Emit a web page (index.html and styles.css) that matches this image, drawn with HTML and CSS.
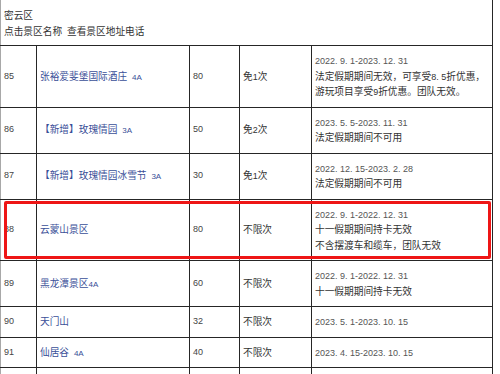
FILE: index.html
```html
<!DOCTYPE html>
<html lang="zh-CN">
<head>
<meta charset="utf-8">
<title>密云区</title>
<link rel="stylesheet" href="styles.css">
</head>
<body>
<div class="page">
<table class="list">
  <colgroup>
    <col class="c-no"><col class="c-name"><col class="c-price"><col class="c-times"><col class="c-note">
  </colgroup>
  <tr class="head">
    <td colspan="5">密云区<br>点击景区名称&ensp;查看景区地址电话</td>
  </tr>
  <tr>
    <td class="no">85</td>
    <td class="name"><a href="#">张裕爱斐堡国际酒庄&ensp;<span class="lv">4A</span></a></td>
    <td class="price">80</td>
    <td class="times">免<span class="num">1</span>次</td>
    <td class="note"><span class="date">2022. 9. 1-2023. 12. 31</span><br>法定假期期间无效，可享受<span class="num">8. 5</span>折优惠，<br>游玩项目享受<span class="num">9</span>折优惠。团队无效。</td>
  </tr>
  <tr>
    <td class="no">86</td>
    <td class="name"><a href="#">【新增】玫瑰情园&ensp;<span class="lv">3A</span></a></td>
    <td class="price">50</td>
    <td class="times">免<span class="num">2</span>次</td>
    <td class="note"><span class="date">2023. 5. 5-2023. 11. 31</span><br>法定假期期间不可用</td>
  </tr>
  <tr>
    <td class="no">87</td>
    <td class="name"><a href="#">【新增】玫瑰情园冰雪节&ensp;<span class="lv">3A</span></a></td>
    <td class="price">30</td>
    <td class="times">免<span class="num">1</span>次</td>
    <td class="note"><span class="date">2022. 12. 15-2023. 2. 28</span><br>法定假期期间不可用</td>
  </tr>
  <tr>
    <td class="no">88</td>
    <td class="name"><a href="#">云蒙山景区</a></td>
    <td class="price">80</td>
    <td class="times">不限次</td>
    <td class="note"><span class="date">2022. 9. 1-2022. 12. 31</span><br>十一假期期间持卡无效<br>不含摆渡车和缆车，团队无效</td>
  </tr>
  <tr>
    <td class="no">89</td>
    <td class="name"><a href="#">黑龙潭景区<span class="lv">4A</span></a></td>
    <td class="price">60</td>
    <td class="times">不限次</td>
    <td class="note"><span class="date">2022. 9. 1-2022. 12. 31</span><br>十一假期期间持卡无效</td>
  </tr>
  <tr>
    <td class="no">90</td>
    <td class="name"><a href="#">天门山</a></td>
    <td class="price">32</td>
    <td class="times">不限次</td>
    <td class="note"><span class="date">2023. 5. 1-2023. 10. 15</span></td>
  </tr>
  <tr>
    <td class="no">91</td>
    <td class="name"><a href="#">仙居谷&ensp;<span class="lv">4A</span></a></td>
    <td class="price">40</td>
    <td class="times">不限次</td>
    <td class="note"><span class="date">2023. 4. 15-2023. 10. 15</span></td>
  </tr>
  <tr class="tail">
    <td class="no">&nbsp;</td>
    <td class="name">&nbsp;</td>
    <td class="price">&nbsp;</td>
    <td class="times">&nbsp;</td>
    <td class="note">&nbsp;</td>
  </tr>
</table>
<div class="highlight"></div>
</div>
</body>
</html>
```
FILE: styles.css
```css
html, body {
  margin: 0;
  padding: 0;
  background: #ffffff;
}
.page {
  position: relative;
  width: 500px;
  height: 374px;
  overflow: hidden;
}
.list {
  border-collapse: collapse;
  table-layout: fixed;
  width: 492px;
  font-family: "Noto Sans CJK SC", "Liberation Sans", sans-serif;
  font-size: 9.7px;
  line-height: 15.5px;
  color: #333333;
}
.c-no { width: 36px; }
.c-name { width: 153px; }
.c-price { width: 50px; }
.c-times { width: 72px; }
.c-note { width: 181px; }
.list td {
  border: 1px solid #262626;
  padding: 7px 3px 7px 3px;
  vertical-align: middle;
  white-space: nowrap;
  overflow: hidden;
}
.list td:first-child {
  border-left-color: #a8a8a8;
}
.list td.times {
  border-left-color: #9a9a9a;
}
.list tr.head td {
  border-top: none;
  padding: 8px 3px 6px 3px;
  color: #333333;
}
.no, .price {
  font-family: "Liberation Sans", sans-serif;
  font-size: 9px;
  color: #444444;
}
.name a {
  color: #3a4f98;
  text-decoration: none;
}
.lv, .num, .date {
  font-family: "Liberation Sans", sans-serif;
  line-height: 1;
}
.lv {
  font-size: 8px;
}
.num {
  font-size: 9px;
}
.date {
  font-size: 9px;
  color: #555555;
}
.note {
  padding-left: 2px;
}
.highlight {
  position: absolute;
  left: 4px;
  top: 201px;
  width: 487px;
  height: 58px;
  box-sizing: border-box;
  border: 3px solid #ee1515;
  border-radius: 2px;
}
```
